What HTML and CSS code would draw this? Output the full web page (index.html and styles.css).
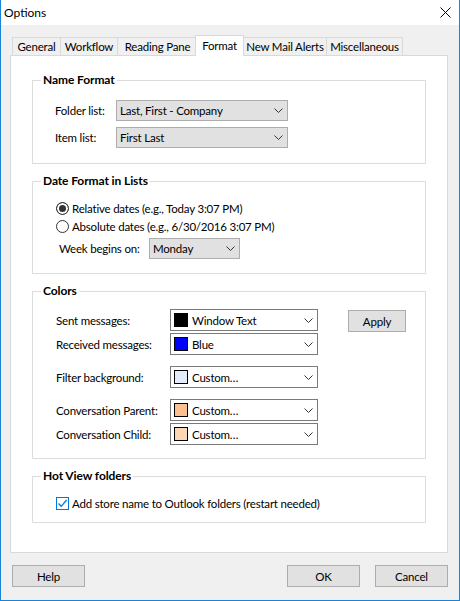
FILE: index.html
```html
<!DOCTYPE html>
<html>
<head>
<meta charset="utf-8">
<link rel="stylesheet" href="styles.css">
</head>
<body>
<div class="window">
  <div class="titlebar">
    <span class="title">Options</span>
    <svg class="close" width="11" height="11" viewBox="0 0 11 11"><path d="M0.5 0.5 L10.5 10.5 M10.5 0.5 L0.5 10.5" stroke="#000" stroke-width="1" fill="none"/></svg>
  </div>
  <div class="client">
    <div class="tabs">
      <div class="tab tab-general">General</div>
      <div class="tab tab-workflow">Workflow</div>
      <div class="tab tab-reading">Reading Pane</div>
      <div class="tab tab-format selected">Format</div>
      <div class="tab tab-alerts">New Mail Alerts</div>
      <div class="tab tab-misc">Miscellaneous</div>
    </div>
    <div class="panel">
      <fieldset class="group">
        <legend>Name Format</legend>
        <div class="name-body">
          <div class="frow">
            <span class="label label-name">Folder list:</span>
            <div class="select sel-name"><span class="stext">Last, First - Company</span><svg class="chev" width="9" height="5" viewBox="0 0 9 5"><path d="M0.5 0.5 L4.5 4.5 L8.5 0.5" stroke="#333" fill="none"/></svg></div>
          </div>
          <div class="frow">
            <span class="label label-name">Item list:</span>
            <div class="select sel-name"><span class="stext">First Last</span><svg class="chev" width="9" height="5" viewBox="0 0 9 5"><path d="M0.5 0.5 L4.5 4.5 L8.5 0.5" stroke="#333" fill="none"/></svg></div>
          </div>
        </div>
      </fieldset>

      <fieldset class="group">
        <legend>Date Format in Lists</legend>
        <div class="date-body">
          <label class="opt"><input type="radio" name="df" checked><span>Relative dates (e.g., Today 3:07 PM)</span></label>
          <label class="opt"><input type="radio" name="df"><span>Absolute dates (e.g., 6/30/2016 3:07 PM)</span></label>
          <div class="frow week-row">
            <span class="label label-week">Week begins on:</span>
            <div class="select sel-week"><span class="stext">Monday</span><svg class="chev" width="9" height="5" viewBox="0 0 9 5"><path d="M0.5 0.5 L4.5 4.5 L8.5 0.5" stroke="#333" fill="none"/></svg></div>
          </div>
        </div>
      </fieldset>

      <fieldset class="group">
        <legend>Colors</legend>
        <div class="colors-body">
          <div class="color-rows">
            <div class="crow">
              <span class="label label-color">Sent messages:</span>
              <div class="select csel"><span class="swatch sw-black"></span><span class="ctext">Window Text</span><svg class="chev" width="9" height="5" viewBox="0 0 9 5"><path d="M0.5 0.5 L4.5 4.5 L8.5 0.5" stroke="#333" fill="none"/></svg></div>
            </div>
            <div class="crow">
              <span class="label label-color">Received messages:</span>
              <div class="select csel"><span class="swatch sw-blue"></span><span class="ctext">Blue</span><svg class="chev" width="9" height="5" viewBox="0 0 9 5"><path d="M0.5 0.5 L4.5 4.5 L8.5 0.5" stroke="#333" fill="none"/></svg></div>
            </div>
            <div class="crow spaced">
              <span class="label label-color">Filter background:</span>
              <div class="select csel"><span class="swatch sw-filter"></span><span class="ctext">Custom…</span><svg class="chev" width="9" height="5" viewBox="0 0 9 5"><path d="M0.5 0.5 L4.5 4.5 L8.5 0.5" stroke="#333" fill="none"/></svg></div>
            </div>
            <div class="crow spaced">
              <span class="label label-color">Conversation Parent:</span>
              <div class="select csel"><span class="swatch sw-parent"></span><span class="ctext">Custom…</span><svg class="chev" width="9" height="5" viewBox="0 0 9 5"><path d="M0.5 0.5 L4.5 4.5 L8.5 0.5" stroke="#333" fill="none"/></svg></div>
            </div>
            <div class="crow">
              <span class="label label-color">Conversation Child:</span>
              <div class="select csel"><span class="swatch sw-child"></span><span class="ctext">Custom…</span><svg class="chev" width="9" height="5" viewBox="0 0 9 5"><path d="M0.5 0.5 L4.5 4.5 L8.5 0.5" stroke="#333" fill="none"/></svg></div>
            </div>
          </div>
          <button class="btn btn-apply">Apply</button>
        </div>
      </fieldset>

      <fieldset class="group">
        <legend>Hot View folders</legend>
        <div class="hot-body">
          <label class="opt">
            <span class="check"><svg width="11" height="11" viewBox="0 0 11 11"><path d="M1.5 5.5 L4.2 8.3 L9.6 2" stroke="#0078d7" stroke-width="1.3" fill="none"/></svg></span>
            <span>Add store name to Outlook folders (restart needed)</span>
          </label>
        </div>
      </fieldset>
    </div>
    <div class="footer">
      <button class="btn btn-foot">Help</button>
      <div class="spacer"></div>
      <button class="btn btn-foot">OK</button>
      <button class="btn btn-foot btn-cancel">Cancel</button>
    </div>
  </div>
</div>
</body>
</html>
```

FILE: styles.css
```css
* { box-sizing: border-box; }
html, body { margin: 0; padding: 0; }
body {
  font-family: Lato, "Liberation Sans", sans-serif;
  font-size: 11.5px;
  letter-spacing: -0.2px;
  color: #000;
  background: #f0f0f0;
}
.window {
  width: 460px;
  height: 601px;
  border: 1px solid #1883d7;
  border-top: none;
  background: #f0f0f0;
  display: flex;
  flex-direction: column;
}
.titlebar {
  height: 25px;
  flex: none;
  background: #fff;
  display: flex;
  align-items: center;
  justify-content: space-between;
  padding: 0 8px 0 3px;
}
.title { font-size: 12px; line-height: 16px; letter-spacing: 0; }
.close { display: block; }
.client {
  flex: 1;
  padding: 10px 11px 0 9px;
  display: flex;
  flex-direction: column;
}
.tabs {
  height: 20px;
  display: flex;
  align-items: flex-end;
  margin-left: 2px;
}
.tab {
  height: 18px;
  border: 1px solid #d9d9d9;
  border-bottom: none;
  background: #f0f0f0;
  display: flex;
  align-items: center;
  justify-content: center;
  white-space: nowrap;
  margin-left: -1px;
  flex: none;
}
.tab-general { width: 49px; margin-left: 0; }
.tab-workflow { width: 58px; }
.tab-reading { width: 81px; }
.tab-format { width: 49px; }
.tab-alerts { width: 84px; }
.tab-misc { width: 77px; }
.tab.selected {
  height: 21px;
  margin-left: -3px;
  margin-bottom: -1px;
  background: #fff;
  position: relative;
  z-index: 1;
  padding-bottom: 2px;
}
.tab.selected + .tab { margin-left: -1px; }
.panel {
  width: 438px;
  height: 498px;
  flex: none;
  background: #fff;
  border: 1px solid #d9d9d9;
  padding: 16px 21px 0 21px;
}
.group {
  margin: 0;
  padding: 0;
  border: 1px solid #dcdcdc;
  min-width: 0;
}
.group + .group { margin-top: 9px; }
.group legend {
  font-weight: bold;
  font-size: 12px;
  letter-spacing: -0.1px;
  line-height: 16px;
  padding: 0 2px;
  margin-left: 8px;
}
.label { flex: none; white-space: nowrap; }
.frow {
  display: flex;
  align-items: center;
  height: 21px;
}
.name-body { padding: 12px 0 15px 22px; }
.name-body .frow + .frow { margin-top: 6px; }
.label-name { width: 61px; }
.select {
  height: 21px;
  border: 1px solid #adadad;
  background: #e1e1e1;
  display: flex;
  align-items: center;
  padding: 0 4px 0 3px;
  white-space: nowrap;
}
.stext { flex: 1; }
.chev { display: block; flex: none; }
.sel-name { width: 172px; }
.date-body { padding: 10px 0 14px 23px; }
.opt {
  display: flex;
  align-items: center;
  height: 18px;
}
.opt input {
  -webkit-appearance: none;
  appearance: none;
  width: 13px;
  height: 13px;
  margin: 0 3px 0 0;
  border: 1px solid #333;
  border-radius: 50%;
  background: #fff;
  flex: none;
}
.opt input:checked {
  background: #333;
  box-shadow: inset 0 0 0 2px #fff;
}
.week-row { margin-top: 3px; padding-left: 3px; }
.label-week { width: 90px; }
.sel-week { width: 91px; }
.colors-body {
  display: flex;
  align-items: flex-start;
  padding: 10px 0 13px 23px;
}
.color-rows { display: flex; flex-direction: column; }
.crow {
  display: flex;
  align-items: center;
  height: 22px;
}
.crow + .crow { margin-top: 2px; }
.crow.spaced { margin-top: 11px; }
.label-color { width: 114px; }
.csel {
  width: 148px;
  height: 22px;
  background: #fff;
  border-color: #7a7a7a;
}
.swatch {
  width: 14px;
  height: 14px;
  border: 1px solid #000;
  flex: none;
}
.ctext { flex: 1; margin-left: 4px; }
.sw-black { background: #000; }
.sw-blue { background: #0000ff; }
.sw-filter { background: #e3ecf8; }
.sw-parent { background: #fac08f; }
.sw-child { background: #fdd6b6; }
.btn {
  font-family: inherit;
  font-size: 11.5px;
  letter-spacing: -0.2px;
  color: #000;
  height: 22px;
  background: #e1e1e1;
  border: 1px solid #adadad;
  padding: 0;
  margin: 0;
}
.btn-apply {
  width: 58px;
  margin: 1px 0 0 30px;
}
.hot-body { padding: 10px 0 10px 23px; }
.check {
  width: 13px;
  height: 13px;
  border: 1px solid #0078d7;
  background: #fff;
  margin-right: 3px;
  display: flex;
  align-items: center;
  justify-content: center;
  flex: none;
}
.check svg { display: block; }
.footer {
  display: flex;
  margin-top: 12px;
  padding-left: 2px;
}
.spacer { flex: 1; }
.btn-foot { width: 73px; }
.btn-cancel { margin-left: 15px; }
```
